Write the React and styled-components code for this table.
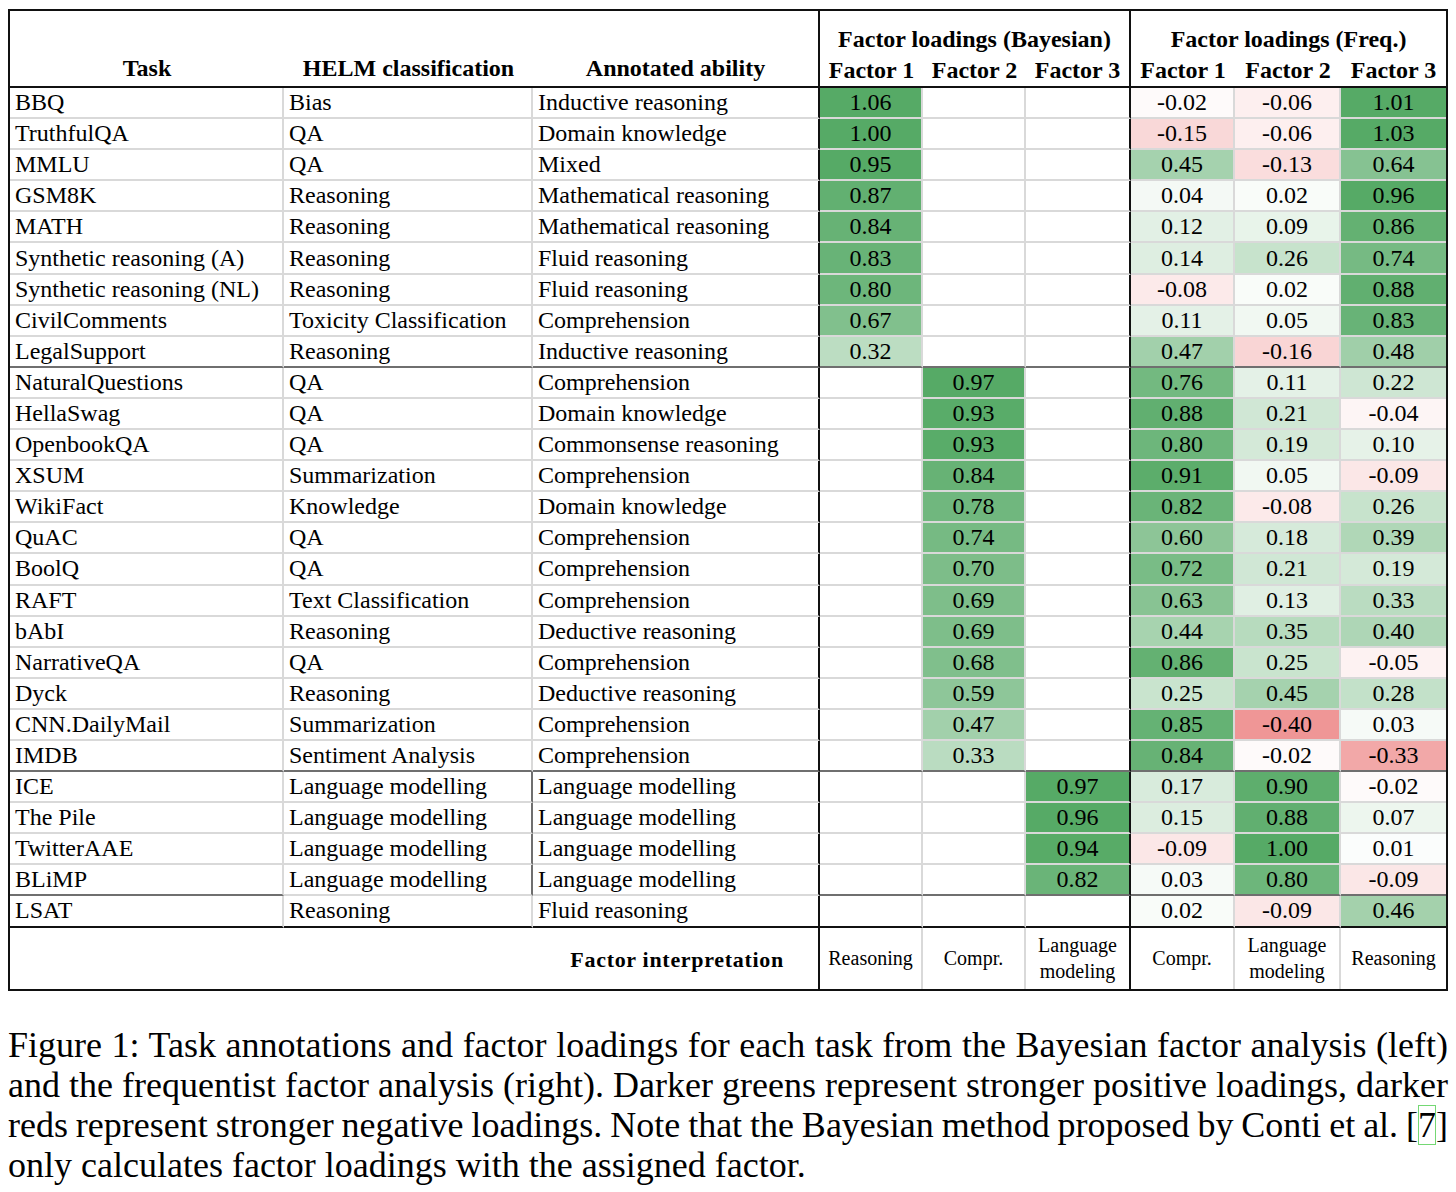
import React from 'react'
import styled, { createGlobalStyle } from 'styled-components'

const GlobalStyle = createGlobalStyle`
  body {
    margin: 0;
    background: #fff;
    color: #000;
    font-family: "Liberation Serif", "Times New Roman", serif;
  }
`

const LM = 'Language modelling'

const rows = [
  ['BBQ', 'Bias', 'Inductive reasoning', [1.06, null, null], [-0.02, -0.06, 1.01]],
  ['TruthfulQA', 'QA', 'Domain knowledge', [1.0, null, null], [-0.15, -0.06, 1.03]],
  ['MMLU', 'QA', 'Mixed', [0.95, null, null], [0.45, -0.13, 0.64]],
  ['GSM8K', 'Reasoning', 'Mathematical reasoning', [0.87, null, null], [0.04, 0.02, 0.96]],
  ['MATH', 'Reasoning', 'Mathematical reasoning', [0.84, null, null], [0.12, 0.09, 0.86]],
  ['Synthetic reasoning (A)', 'Reasoning', 'Fluid reasoning', [0.83, null, null], [0.14, 0.26, 0.74]],
  ['Synthetic reasoning (NL)', 'Reasoning', 'Fluid reasoning', [0.8, null, null], [-0.08, 0.02, 0.88]],
  ['CivilComments', 'Toxicity Classification', 'Comprehension', [0.67, null, null], [0.11, 0.05, 0.83]],
  ['LegalSupport', 'Reasoning', 'Inductive reasoning', [0.32, null, null], [0.47, -0.16, 0.48]],
  ['NaturalQuestions', 'QA', 'Comprehension', [null, 0.97, null], [0.76, 0.11, 0.22]],
  ['HellaSwag', 'QA', 'Domain knowledge', [null, 0.93, null], [0.88, 0.21, -0.04]],
  ['OpenbookQA', 'QA', 'Commonsense reasoning', [null, 0.93, null], [0.8, 0.19, 0.1]],
  ['XSUM', 'Summarization', 'Comprehension', [null, 0.84, null], [0.91, 0.05, -0.09]],
  ['WikiFact', 'Knowledge', 'Domain knowledge', [null, 0.78, null], [0.82, -0.08, 0.26]],
  ['QuAC', 'QA', 'Comprehension', [null, 0.74, null], [0.6, 0.18, 0.39]],
  ['BoolQ', 'QA', 'Comprehension', [null, 0.7, null], [0.72, 0.21, 0.19]],
  ['RAFT', 'Text Classification', 'Comprehension', [null, 0.69, null], [0.63, 0.13, 0.33]],
  ['bAbI', 'Reasoning', 'Deductive reasoning', [null, 0.69, null], [0.44, 0.35, 0.4]],
  ['NarrativeQA', 'QA', 'Comprehension', [null, 0.68, null], [0.86, 0.25, -0.05]],
  ['Dyck', 'Reasoning', 'Deductive reasoning', [null, 0.59, null], [0.25, 0.45, 0.28]],
  ['CNN.DailyMail', 'Summarization', 'Comprehension', [null, 0.47, null], [0.85, -0.4, 0.03]],
  ['IMDB', 'Sentiment Analysis', 'Comprehension', [null, 0.33, null], [0.84, -0.02, -0.33]],
  ['ICE', LM, LM, [null, null, 0.97], [0.17, 0.9, -0.02]],
  ['The Pile', LM, LM, [null, null, 0.96], [0.15, 0.88, 0.07]],
  ['TwitterAAE', LM, LM, [null, null, 0.94], [-0.09, 1.0, 0.01]],
  ['BLiMP', LM, LM, [null, null, 0.82], [0.03, 0.8, -0.09]],
  ['LSAT', 'Reasoning', 'Fluid reasoning', [null, null, null], [0.02, -0.09, 0.46]],
]

// rows after which a darker group rule is drawn
const groupEnds = [8, 21, 25]
const lmGroup = [22, 23, 24, 25]

const lines = {
  light: '2px solid #d9d9d9',
  dark: '2px solid #6f6f6f',
  black: '2px solid #111',
  none: 'none',
}

const mix = (a, b, t) => Math.round(a + (b - a) * t)

const cellColor = v => {
  if (v == null) return 'transparent'
  if (v >= 0) {
    const t = Math.pow(Math.min(1, v / 0.95), 0.85)
    return `rgb(${mix(255, 86, t)}, ${mix(255, 170, t)}, ${mix(255, 102, t)})`
  }
  const t = Math.min(1, -v / 0.4)
  return `rgb(${mix(255, 239, t)}, ${mix(255, 150, t)}, ${mix(255, 150, t)})`
}

const fmt = v => (v == null ? '' : v.toFixed(2))

const App = () => (
  <React.Fragment>
    <GlobalStyle />
    <Page>
      <Table>
        <colgroup>
          {[274, 249, 287, 103, 103, 105, 104, 106, 105].map((w, i) => (
            <Col key={i} $w={w} />
          ))}
        </colgroup>
        <thead>
          <HeadRow $h={44}>
            <HeadCell rowSpan={2} $bottom="black">Task</HeadCell>
            <HeadCell rowSpan={2} $bottom="black">HELM classification</HeadCell>
            <HeadCell rowSpan={2} $bottom="black" $right="black">
              Annotated ability
            </HeadCell>
            <GroupHead colSpan={3} $right="black">Factor loadings (Bayesian)</GroupHead>
            <GroupHead colSpan={3}>Factor loadings (Freq.)</GroupHead>
          </HeadRow>
          <HeadRow $h={33}>
            {[1, 2, 3, 1, 2, 3].map((n, i) => (
              <SubHead key={i} $bottom="black" $right={i === 2 ? 'black' : 'none'}>
                Factor {n}
              </SubHead>
            ))}
          </HeadRow>
        </thead>
        <tbody>
          {rows.map(([task, helm, ability, bayes, freq], r) => {
            const last = r === rows.length - 1
            const group = groupEnds.includes(r)
            const base = last ? 'black' : group ? 'dark' : 'light'
            const textBottom = r === 25 ? 'light' : base
            return (
              <BodyRow key={r}>
                <TextCell $bottom={base} $right="light">{task}</TextCell>
                <TextCell
                  $bottom={textBottom}
                  $right={lmGroup.includes(r) ? 'dark' : 'light'}
                >
                  {helm}
                </TextCell>
                <TextCell $bottom={textBottom} $right="black">{ability}</TextCell>
                {bayes.map((v, i) => (
                  <NumCell
                    key={'b' + i}
                    $bottom={base}
                    $right={i === 2 ? 'black' : 'light'}
                    $bg={cellColor(v)}
                  >
                    {fmt(v)}
                  </NumCell>
                ))}
                {freq.map((v, i) => (
                  <NumCell
                    key={'f' + i}
                    $bottom={base}
                    $right={i === 2 ? 'none' : 'light'}
                    $bg={cellColor(v)}
                  >
                    {fmt(v)}
                  </NumCell>
                ))}
              </BodyRow>
            )
          })}
        </tbody>
        <tfoot>
          <FootRow>
            <FootLabel colSpan={3} $right="black">Factor interpretation</FootLabel>
            <FootCell $right="light">Reasoning</FootCell>
            <FootCell $right="light">Compr.</FootCell>
            <FootCell $right="black">
              Language
              <br />
              modeling
            </FootCell>
            <FootCell $right="light">Compr.</FootCell>
            <FootCell $right="light">
              Language
              <br />
              modeling
            </FootCell>
            <FootCell $right="none">Reasoning</FootCell>
          </FootRow>
        </tfoot>
      </Table>
      <Caption>
        <CaptionLine>
          Figure 1: Task annotations and factor loadings for each task from the Bayesian factor
          analysis (left)
        </CaptionLine>
        <CaptionLine>
          and the frequentist factor analysis (right). Darker greens represent stronger positive
          loadings, darker
        </CaptionLine>
        <CaptionLine>
          reds represent stronger negative loadings. Note that the Bayesian method proposed by
          Conti et al. [<Cite>7</Cite>]
        </CaptionLine>
        <CaptionLine $last>only calculates factor loadings with the assigned factor.</CaptionLine>
      </Caption>
    </Page>
  </React.Fragment>
)

export default App

const Page = styled.div`
  width: 1440px;
  padding: 9px 8px 0;
`

const Table = styled.table`
  width: 1440px;
  table-layout: fixed;
  border-collapse: separate;
  border-spacing: 0;
  border: 2px solid #111;
`

const Col = styled.col`
  width: ${p => p.$w}px;
`

const HeadRow = styled.tr`
  height: ${p => p.$h}px;
`

const HeadCell = styled.th`
  padding: 0 0 4px;
  vertical-align: bottom;
  text-align: center;
  font-size: 24px;
  line-height: 28px;
  font-weight: 700;
  border-right: ${p => lines[p.$right || 'none']};
  border-bottom: ${p => lines[p.$bottom || 'none']};
`

const GroupHead = styled(HeadCell)`
  padding-bottom: 2px;
`

const SubHead = styled(HeadCell)`
  padding: 0;
  vertical-align: middle;
  line-height: 31px;
`

const BodyRow = styled.tr`
  height: 31.1px;
`

const BaseCell = styled.td`
  padding: 0 5px;
  font-size: 24px;
  line-height: 29px;
  white-space: nowrap;
  vertical-align: middle;
  border-right: ${p => lines[p.$right || 'none']};
  border-bottom: ${p => lines[p.$bottom || 'none']};
`

const TextCell = styled(BaseCell)`
  text-align: left;
`

const NumCell = styled(BaseCell)`
  text-align: center;
  background: ${p => p.$bg};
`

const FootRow = styled.tr`
  height: 61px;
`

const FootLabel = styled.td`
  padding: 4px 34px 0 0;
  text-align: right;
  font-size: 22px;
  font-weight: 700;
  letter-spacing: 0.7px;
  border-right: ${p => lines[p.$right]};
`

const FootCell = styled.td`
  padding: 0;
  text-align: center;
  font-size: 20px;
  line-height: 26px;
  border-right: ${p => lines[p.$right]};
`

const Caption = styled.div`
  margin-top: 34px;
  font-size: 36px;
  line-height: 40px;
`

const CaptionLine = styled.div`
  white-space: nowrap;
  word-spacing: ${p => (p.$last ? '0' : '-2px')};
  text-align: ${p => (p.$last ? 'left' : 'justify')};
  text-align-last: ${p => (p.$last ? 'left' : 'justify')};
`

const Cite = styled.span`
  outline: 1.5px solid #74d874;
  outline-offset: -1px;
`
